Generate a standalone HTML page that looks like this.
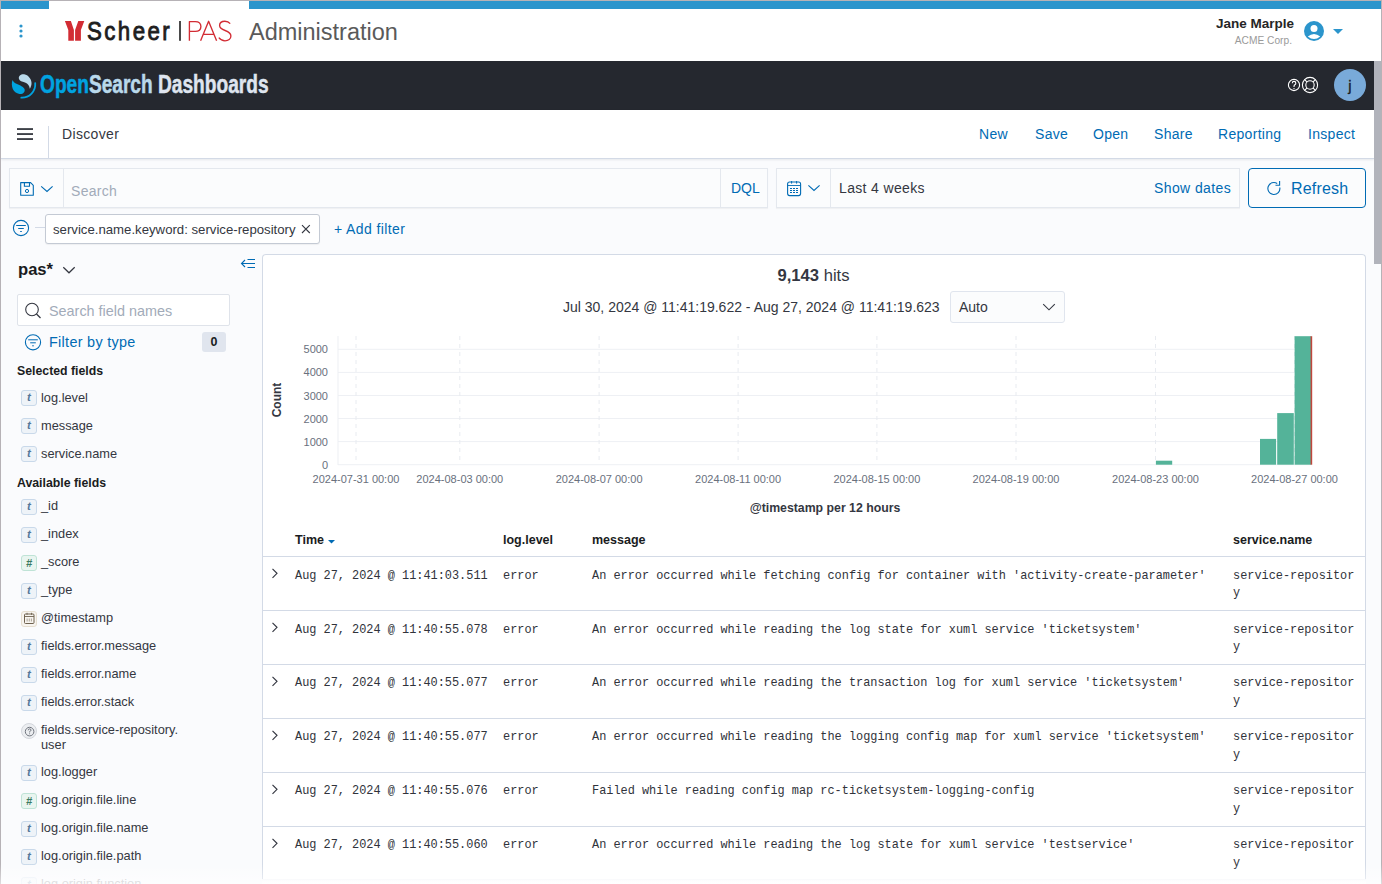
<!DOCTYPE html>
<html><head><meta charset="utf-8">
<style>
*{box-sizing:border-box;margin:0;padding:0}
html,body{width:1382px;height:884px;overflow:hidden;background:#fafbfd;font-family:"Liberation Sans",sans-serif;color:#343741}
.a{position:absolute;white-space:nowrap}
#frame{position:absolute;left:0;top:0;width:1382px;height:884px;border-top:1px solid #b6b2b6;border-left:1px solid #b6b2b6;border-right:1px solid #b6b2b6}
.blue{background:#2b95cc}
.lnk{color:#006bb4}
svg{position:absolute;overflow:visible}
.tok{left:21px;width:16px;height:16px;border-radius:3px;border:1px solid;font-size:11px;line-height:14px;text-align:center;font-weight:bold}
.tt{background:#eef3f8;border-color:#c9d9ea;color:#55789a;font-style:italic;font-size:11.5px;line-height:13px}
.tn{background:#e9f5f0;border-color:#bfe3d6;color:#3b7a62;font-size:11px;font-style:italic;line-height:14px}
.td{background:#f7f4ef;border-color:#e6ded0}
.tq{background:#eceef1;border-color:#d3d6dc;border-radius:50%}
.ytk{left:288px;width:40px;text-align:right;font-size:11px;line-height:12px;color:#69707d}
.xtk{top:473px;width:120px;text-align:center;font-size:11px;line-height:12px;color:#69707d}
.th{top:533px;font-size:12.5px;line-height:14px;font-weight:bold;color:#1a1c21}
.td2{font-family:"Liberation Mono",monospace;font-size:11.9px;line-height:17.6px;color:#30333b;margin-top:-1.2px}
.fld{left:41px;font-size:12.8px;line-height:14px;color:#343741}
</style></head><body>
<!-- ===== top scheer header ===== -->
<div class="a" style="left:0;top:0;width:1382px;height:61px;background:#fff"></div>
<div class="a blue" style="left:1px;top:1px;width:48px;height:8px"></div>
<div class="a blue" style="left:249px;top:1px;width:1132px;height:8px"></div>
<svg style="left:0;top:0" width="1382" height="61">
 <circle cx="21" cy="26" r="1.6" fill="#2b95cc"/><circle cx="21" cy="31" r="1.6" fill="#2b95cc"/><circle cx="21" cy="36" r="1.6" fill="#2b95cc"/>
 <path d="M64.9 21.1 H70.9 L73.9 29.9 V40.8 H68.3 V29.9 Z M78.3 21.1 H84.3 L80.9 29.9 V40.8 H75.1 V29.9 Z" fill="#d22c34"/>
 <rect x="179" y="21" width="2" height="19.8" fill="#4a4a4a"/>
 <g fill="none" stroke="#d22c34" stroke-width="1.35" stroke-linejoin="round">
 <path d="M189.4 40.8 V21.6 H195.2 C198.8 21.6 200.9 23.4 200.9 26.5 C200.9 29.6 198.8 31.4 195.2 31.4 H189.4"/>
 <path d="M200.6 40.8 L208.6 21.3 L216.6 40.8 M203.6 34.3 H213.6"/>
 <path d="M230.2 23.6 C228.8 21.9 227 21.2 224.9 21.2 C221.7 21.2 219.6 23.1 219.6 25.6 C219.6 28.5 222.2 29.5 225.1 30.5 C228.6 31.7 230.9 33.1 230.9 36.1 C230.9 38.9 228.4 40.8 225 40.8 C222.4 40.8 220.3 39.6 218.8 37.7"/>
 </g>
 <circle cx="1314" cy="31" r="10" fill="#2b95cc"/>
 <circle cx="1314" cy="28.4" r="3.5" fill="#fff"/>
 <path d="M1307.8 36.6 Q1314 31.4 1320.2 36.6 Q1314 41.6 1307.8 36.6Z" fill="#fff"/>
 <path d="M1333 29 H1343 L1338 34 Z" fill="#2b95cc"/>
</svg>
<div class="a" id="scheer" style="left:87px;top:16px;font-size:26.5px;line-height:30px;font-weight:normal;color:#1e1e1e;letter-spacing:2.9px;-webkit-text-stroke:0.9px #1e1e1e;transform-origin:0 0;transform:scaleX(0.84)">Scheer</div>
<div class="a" id="admin" style="left:249px;top:18px;font-size:23.5px;line-height:28px;color:#5a5a5a;">Administration</div>
<div class="a" id="jane" style="right:88px;top:17px;font-size:13.5px;line-height:14px;font-weight:bold;color:#262626;text-align:right">Jane Marple</div>
<div class="a" id="acme" style="right:90px;top:35px;font-size:10.2px;line-height:12px;color:#9a9a9a;text-align:right">ACME Corp.</div>

<!-- ===== OSD header ===== -->
<div class="a" style="left:1px;top:61px;width:1373px;height:49px;background:#25282f"></div>
<svg style="left:0;top:61px" width="1374" height="49">
 <g transform="translate(0,-61)">
 <path d="M19 79 C18 75.5 22 73.5 25 74.5 C29 75.5 32 80 31.5 84 C31.2 86 30.5 88 29.8 88.8 C29.5 86 28 83.5 25 82.5 C22 81.5 19.5 81 19 79 Z" fill="#b9d9eb"/>
 <path d="M12.5 80 C10.5 86 13 93 19.5 94 C23 94.3 25.5 92 24.5 89 C23.5 86.5 20 85.5 17 84 C14.5 83 13 81.5 12.5 80 Z" fill="#00a3e0"/>
 <path d="M35.2 83.2 A13.3 13.3 0 0 1 21.3 97.7" stroke="#00a3e0" stroke-width="1.8" fill="none" stroke-linecap="round"/>
 </g>
 <circle cx="1294" cy="24" r="5.6" stroke="#fff" stroke-width="1.1" fill="none"/>
 <circle cx="1310" cy="24" r="7.6" stroke="#fff" stroke-width="1.1" fill="none"/>
 <circle cx="1310" cy="24" r="4.2" stroke="#fff" stroke-width="1.1" fill="none"/>
 <path d="M1312.9 21.1 L1315.4 18.6 M1307.1 21.1 L1304.6 18.6 M1312.9 26.9 L1315.4 29.4 M1307.1 26.9 L1304.6 29.4" stroke="#fff" stroke-width="1.1"/>
 <path d="M1292.3 22.3 Q1292.3 20.4 1294 20.4 Q1295.8 20.4 1295.8 22.2 Q1295.8 23.3 1294.8 23.8 Q1294 24.3 1294 25.4 V25.9" fill="none" stroke="#fff" stroke-width="1.1"/>
 <circle cx="1294" cy="27.6" r="0.7" fill="#fff"/>
 <circle cx="1350" cy="24" r="16" fill="#79aad9"/>
</svg>
<div class="a" style="left:1334px;top:76px;font-size:15px;line-height:20px;color:#1a1c21;width:32px;text-align:center;-webkit-text-stroke:0.3px #1a1c21">j</div>
<div class="a" id="osd" style="left:40px;top:70px;font-size:25px;line-height:28px;font-weight:bold;transform-origin:0 0;transform:scaleX(0.765);-webkit-text-stroke:0.5px currentColor"><span style="color:#00a3e0">Open</span><span style="color:#b9d9eb">Search</span> <span style="color:#dfe5ef">Dashboards</span></div>

<!-- ===== nav bar ===== -->
<div class="a" style="left:1px;top:110px;width:1373px;height:49px;background:#fff;border-bottom:1px solid #d3dae6;box-shadow:0 1px 2px rgba(50,60,80,0.1)"></div>
<svg style="left:0;top:110px" width="100" height="48">
 <rect x="17" y="18.2" width="16" height="1.7" fill="#2a2d35"/>
 <rect x="17" y="23.2" width="16" height="1.7" fill="#2a2d35"/>
 <rect x="17" y="28.2" width="16" height="1.7" fill="#2a2d35"/>
 <rect x="48" y="16" width="1" height="32" fill="#d3dae6"/>
</svg>
<div class="a" id="discover" style="left:62px;top:127px;font-size:14px;line-height:14px;color:#343741;letter-spacing:0.35px">Discover</div>
<div class="a lnk" style="left:979px;top:127px;font-size:14px;line-height:14px;letter-spacing:0.3px">New</div>
<div class="a lnk" style="left:1035px;top:127px;font-size:14px;line-height:14px;letter-spacing:0.3px">Save</div>
<div class="a lnk" style="left:1093px;top:127px;font-size:14px;line-height:14px;letter-spacing:0.3px">Open</div>
<div class="a lnk" style="left:1154px;top:127px;font-size:14px;line-height:14px;letter-spacing:0.3px">Share</div>
<div class="a lnk" style="left:1218px;top:127px;font-size:14px;line-height:14px;letter-spacing:0.3px">Reporting</div>
<div class="a lnk" style="left:1308px;top:127px;font-size:14px;line-height:14px;letter-spacing:0.3px">Inspect</div>


<!-- ===== query bar ===== -->
<div class="a" style="left:9px;top:168px;width:759px;height:40px;background:#fbfcfd;border:1px solid #e4e8ee;box-shadow:0 1px 1px rgba(0,0,0,0.04)"></div>
<div class="a" style="left:63px;top:169px;width:1px;height:38px;background:#e4e8ee"></div>
<div class="a" style="left:720px;top:169px;width:1px;height:38px;background:#e4e8ee"></div>
<div class="a" style="left:776px;top:168px;width:464px;height:40px;background:#fbfcfd;border:1px solid #e4e8ee;box-shadow:0 1px 1px rgba(0,0,0,0.04)"></div>
<div class="a" style="left:830px;top:169px;width:1px;height:38px;background:#e4e8ee"></div>
<svg style="left:0;top:160px" width="900" height="50">
 <path d="M20.7 22.6 H30.6 L33.3 25.3 V35.2 H20.7 Z" fill="none" stroke="#006bb4" stroke-width="1.1" stroke-linejoin="round"/>
 <path d="M24.4 22.6 V26.3 H29.5 V22.6" fill="none" stroke="#006bb4" stroke-width="1.1"/>
 <circle cx="27" cy="31" r="1.6" fill="none" stroke="#006bb4" stroke-width="1"/>
 <path d="M41.2 26.3 L47 31.5 L52.6 26.3" fill="none" stroke="#006bb4" stroke-width="1.1"/>
 <rect x="787.6" y="22" width="13" height="13.6" rx="2" fill="none" stroke="#006bb4" stroke-width="1.1"/>
 <rect x="787.6" y="25" width="13" height="0.9" fill="#006bb4"/>
 <rect x="791.1" y="21" width="1" height="2.6" fill="#006bb4"/>
 <rect x="796.1" y="21" width="1" height="2.6" fill="#006bb4"/>
 <g fill="#006bb4"><rect x="790" y="28" width="2" height="1"/><rect x="793" y="28" width="2" height="1"/><rect x="796" y="28" width="2" height="1"/>
 <rect x="790" y="30" width="2" height="1"/><rect x="793" y="30" width="2" height="1"/><rect x="796" y="30" width="2" height="1"/>
 <rect x="790" y="32" width="2" height="1"/><rect x="793" y="32" width="2" height="1"/><rect x="796" y="32" width="2" height="1"/></g>
 <path d="M808.4 25.3 L814 30.5 L819.6 25.3" fill="none" stroke="#006bb4" stroke-width="1.1"/>
</svg>
<div class="a" style="left:71px;top:184px;font-size:14px;line-height:14px;color:#a2abb9;letter-spacing:0.3px">Search</div>
<div class="a lnk" style="left:731px;top:181px;font-size:14px;line-height:14px">DQL</div>
<div class="a" style="left:839px;top:181px;font-size:14px;line-height:14px;color:#343741;letter-spacing:0.35px">Last 4 weeks</div>
<div class="a lnk" style="left:1154px;top:181px;font-size:14px;line-height:14px;letter-spacing:0.4px">Show dates</div>
<div class="a" style="left:1248px;top:168px;width:118px;height:40px;border:1px solid #006bb4;border-radius:4px;background:#fbfcfd"></div>
<svg style="left:1260px;top:175px" width="30" height="25">
 <path d="M17.2 8.5 A6 6 0 1 0 19.8 12.5" fill="none" stroke="#006bb4" stroke-width="1.1"/>
 <path d="M19.6 6 V10.3 H15.5" fill="none" stroke="#006bb4" stroke-width="1.1"/>
</svg>
<div class="a lnk" style="left:1291px;top:181px;font-size:16px;line-height:16px;letter-spacing:0.2px">Refresh</div>

<!-- ===== filter bar ===== -->
<svg style="left:0;top:210px" width="60" height="40">
 <circle cx="21" cy="18" r="7.6" fill="none" stroke="#006bb4" stroke-width="1.1"/>
 <rect x="16.2" y="15" width="9.6" height="1" fill="#006bb4"/>
 <rect x="18.2" y="18" width="5.6" height="1" fill="#006bb4"/>
 <rect x="20.2" y="21" width="1.6" height="1" fill="#006bb4"/>
 <rect x="35" y="17" width="10" height="1" fill="#d3dae6"/>
</svg>
<div class="a" style="left:45px;top:214px;width:275px;height:30px;background:#fff;border:1px solid #c4cad4;border-radius:3px;box-shadow:0 1px 1px rgba(0,0,0,0.05)"></div>
<div class="a" id="pilltxt" style="left:53px;top:223px;font-size:13.2px;line-height:14px;color:#343741">service.name.keyword: service-repository</div>
<svg style="left:300px;top:223px" width="12" height="12">
 <path d="M2 2.2 L9.8 10 M9.8 2.2 L2 10" stroke="#343741" stroke-width="1.1"/>
</svg>
<div class="a lnk" id="addf" style="left:334px;top:222px;font-size:14px;line-height:14px;letter-spacing:0.4px">+ Add filter</div>


<!-- ===== sidebar ===== -->
<div class="a" id="pas2" style="left:18px;top:261px;font-size:16.6px;line-height:18px;font-weight:bold;color:#1a1c21">pas*</div>
<svg style="left:0;top:250px" width="270" height="80">
 <path d="M63.3 17.3 L69 22.8 L74.7 17.3" fill="none" stroke="#343741" stroke-width="1.2"/>
 <path d="M245 10 L241.5 13.5 L245 17 M241.5 13.5 H255 M247.5 9.5 H255 M247.5 17.5 H255" fill="none" stroke="#006bb4" stroke-width="1.1"/>
</svg>
<div class="a" style="left:17px;top:294px;width:213px;height:32px;background:#fff;border:1px solid #dfe3ea;border-radius:2px"></div>
<svg style="left:0;top:290px" width="260" height="70">
 <circle cx="32" cy="19.5" r="6.3" fill="none" stroke="#343741" stroke-width="1.1"/>
 <path d="M36.5 24 L40.5 28" stroke="#343741" stroke-width="1.2"/>
 <circle cx="33" cy="52.3" r="7.6" fill="none" stroke="#006bb4" stroke-width="1.1"/>
 <rect x="28.2" y="49.3" width="9.6" height="1" fill="#006bb4"/>
 <rect x="30.2" y="52.3" width="5.6" height="1" fill="#006bb4"/>
 <rect x="32.2" y="55.3" width="1.6" height="1" fill="#006bb4"/>
</svg>
<div class="a" style="left:49px;top:304px;font-size:14.4px;line-height:14px;color:#a2abb9">Search field names</div>
<div class="a lnk" style="left:49px;top:335px;font-size:14.4px;line-height:14px;letter-spacing:0.3px">Filter by type</div>
<div class="a" style="left:202px;top:332px;width:24px;height:20px;background:#e0e5ee;border-radius:3px;font-size:12.5px;line-height:20px;text-align:center;color:#1a1c21;font-weight:bold">0</div>
<div class="a" style="left:17px;top:365px;font-size:12.3px;line-height:12px;font-weight:bold;color:#1a1c21">Selected fields</div>
<div class="a tok tt" style="top:390px">t</div><div class="a fld" style="top:390.5px">log.level</div><div class="a tok tt" style="top:418px">t</div><div class="a fld" style="top:418.5px">message</div><div class="a tok tt" style="top:446px">t</div><div class="a fld" style="top:446.5px">service.name</div><div class="a" style="left:17px;top:477px;font-size:12.3px;line-height:12px;font-weight:bold;color:#1a1c21">Available fields</div>
<div class="a tok tt" style="top:498.5px">t</div><div class="a fld" style="top:499.0px">_id</div><div class="a tok tt" style="top:526.5px">t</div><div class="a fld" style="top:527.0px">_index</div><div class="a tok tn" style="top:554.5px">#</div><div class="a fld" style="top:555.0px">_score</div><div class="a tok tt" style="top:582.5px">t</div><div class="a fld" style="top:583.0px">_type</div><div class="a tok td" style="top:610.5px"><svg style="left:-1px;top:-1px" width="16" height="16"><rect x="3.5" y="3" width="9.5" height="9.5" rx="1" fill="none" stroke="#6f6250" stroke-width="1"/><rect x="3.5" y="5" width="9.5" height="0.9" fill="#6f6250"/><rect x="5.6" y="1.8" width="0.9" height="2" fill="#6f6250"/><rect x="10" y="1.8" width="0.9" height="2" fill="#6f6250"/><rect x="5.7" y="7.5" width="0.8" height="3" fill="#9a8f80"/><rect x="7.8" y="7.5" width="0.8" height="3" fill="#9a8f80"/><rect x="9.9" y="7.5" width="0.8" height="3" fill="#9a8f80"/></svg></div><div class="a fld" style="top:611.0px">@timestamp</div><div class="a tok tt" style="top:638.5px">t</div><div class="a fld" style="top:639.0px">fields.error.message</div><div class="a tok tt" style="top:666.5px">t</div><div class="a fld" style="top:667.0px">fields.error.name</div><div class="a tok tt" style="top:694.5px">t</div><div class="a fld" style="top:695.0px">fields.error.stack</div><div class="a tok tq" style="top:722.5px"><svg style="left:0;top:0" width="15" height="15"><circle cx="7.6" cy="7.6" r="4.3" fill="none" stroke="#6f747d" stroke-width="1"/><path d="M6.2 6.3 Q6.2 4.9 7.6 4.9 Q9 4.9 9 6.2 Q9 7 7.6 7.6 V8.4" fill="none" stroke="#6f747d" stroke-width="1"/><circle cx="7.6" cy="9.8" r="0.55" fill="#6f747d"/></svg></div><div class="a fld" style="top:723.0px">fields.service-repository.</div><div class="a fld" style="top:738.0px">user</div><div class="a tok tt" style="top:764.5px">t</div><div class="a fld" style="top:765.0px">log.logger</div><div class="a tok tn" style="top:792.5px">#</div><div class="a fld" style="top:793.0px">log.origin.file.line</div><div class="a tok tt" style="top:820.5px">t</div><div class="a fld" style="top:821.0px">log.origin.file.name</div><div class="a tok tt" style="top:848.5px">t</div><div class="a fld" style="top:849.0px">log.origin.file.path</div><div class="a tok tt" style="top:876.5px">t</div><div class="a fld" style="top:877.0px">log.origin.function</div><div class="a" style="left:1px;top:864px;width:260px;height:20px;background:linear-gradient(rgba(250,251,253,0),rgba(250,251,253,0.7) 60%)"></div>


<!-- ===== main panel ===== -->
<div class="a" style="left:262px;top:254px;width:1104px;height:626px;background:#fff;border:1px solid #d3dae6;border-bottom:none;border-radius:4px 4px 0 0"></div>
<div class="a" style="left:262px;top:879px;width:1104px;height:5px;background:linear-gradient(#f3f5f8,#fdfdfe 40%,#fff)"></div>
<div class="a" id="hits" style="left:0;top:268px;width:1627px;text-align:center;font-size:16.6px;line-height:16px;color:#343741"><b>9,143</b> hits</div>
<div class="a" id="range" style="left:563px;top:300px;font-size:14px;line-height:14px;color:#343741">Jul 30, 2024 @ 11:41:19.622 - Aug 27, 2024 @ 11:41:19.623</div>
<div class="a" style="left:950px;top:291px;width:115px;height:32px;background:#fbfcfd;border:1px solid #e0e5ee;border-radius:3px"></div>
<div class="a" style="left:959px;top:300px;font-size:14px;line-height:14px;color:#343741">Auto</div>
<svg style="left:1000px;top:290px" width="80" height="30">
 <path d="M43.2 14.2 L49 19.8 L54.8 14.2" fill="none" stroke="#343741" stroke-width="1.1"/>
</svg>
<div class="a" id="count" style="left:259px;top:393px;width:35px;font-size:12px;line-height:14px;font-weight:bold;color:#343741;transform:rotate(-90deg);text-align:center">Count</div>
<div class="a ytk" style="top:343.3px">5000</div>
<div class="a ytk" style="top:366.4px">4000</div>
<div class="a ytk" style="top:389.5px">3000</div>
<div class="a ytk" style="top:412.5px">2000</div>
<div class="a ytk" style="top:435.6px">1000</div>
<div class="a ytk" style="top:458.7px">0</div>
<svg style="left:0;top:0" width="1382" height="884">
 <rect x="338" y="348.8" width="974" height="1" fill="#eef0f4"/>
 <rect x="338" y="371.9" width="974" height="1" fill="#eef0f4"/>
 <rect x="338" y="395.0" width="974" height="1" fill="#eef0f4"/>
 <rect x="338" y="418.0" width="974" height="1" fill="#eef0f4"/>
 <rect x="338" y="441.1" width="974" height="1" fill="#eef0f4"/>
 <rect x="338" y="464.2" width="974" height="1" fill="#eef0f4"/>
 <rect x="337.5" y="336" width="1" height="129" fill="#eef0f4"/>
 <line x1="356" y1="336" x2="356" y2="464" stroke="#e8ebf0" stroke-width="1" stroke-dasharray="4 4"/>
 <line x1="459.8" y1="336" x2="459.8" y2="464" stroke="#e8ebf0" stroke-width="1" stroke-dasharray="4 4"/>
 <line x1="599.1" y1="336" x2="599.1" y2="464" stroke="#e8ebf0" stroke-width="1" stroke-dasharray="4 4"/>
 <line x1="738.1" y1="336" x2="738.1" y2="464" stroke="#e8ebf0" stroke-width="1" stroke-dasharray="4 4"/>
 <line x1="876.9" y1="336" x2="876.9" y2="464" stroke="#e8ebf0" stroke-width="1" stroke-dasharray="4 4"/>
 <line x1="1016" y1="336" x2="1016" y2="464" stroke="#e8ebf0" stroke-width="1" stroke-dasharray="4 4"/>
 <line x1="1155.5" y1="336" x2="1155.5" y2="464" stroke="#e8ebf0" stroke-width="1" stroke-dasharray="4 4"/>
 <line x1="1294.5" y1="336" x2="1294.5" y2="464" stroke="#e8ebf0" stroke-width="1" stroke-dasharray="4 4"/>
 <rect x="1155.9" y="460.7" width="16.3" height="4.0" fill="#54b399"/>
 <rect x="1260" y="438.9" width="16.1" height="25.8" fill="#54b399"/>
 <rect x="1277.2" y="413.1" width="16.6" height="51.6" fill="#54b399"/>
 <rect x="1294.6" y="336.2" width="16.4" height="128.5" fill="#54b399"/>
 <rect x="1310.6" y="336.2" width="1.6" height="128.5" fill="#c0473d"/>
</svg>
<div class="a xtk" style="left:296.0px">2024-07-31 00:00</div>
<div class="a xtk" style="left:399.8px">2024-08-03 00:00</div>
<div class="a xtk" style="left:539.1px">2024-08-07 00:00</div>
<div class="a xtk" style="left:678.1px">2024-08-11 00:00</div>
<div class="a xtk" style="left:816.9px">2024-08-15 00:00</div>
<div class="a xtk" style="left:956.0px">2024-08-19 00:00</div>
<div class="a xtk" style="left:1095.5px">2024-08-23 00:00</div>
<div class="a xtk" style="left:1234.5px">2024-08-27 00:00</div>
<div class="a" id="tsl" style="left:625px;top:501px;width:400px;text-align:center;font-size:12.3px;line-height:14px;font-weight:bold;color:#343741">@timestamp per 12 hours</div>


<!-- ===== table ===== -->
<div class="a th" style="left:295px">Time</div>
<svg style="left:320px;top:535px" width="20" height="12"><path d="M8 5 H15 L11.5 8.6 Z" fill="#006bb4"/></svg>
<div class="a th" style="left:503px">log.level</div>
<div class="a th" style="left:592px">message</div>
<div class="a th" style="left:1233px">service.name</div>
<div class="a" style="left:263px;top:556px;width:1102px;height:1px;background:#d3dae6"></div>
<svg style="left:268px;top:566px" width="14" height="14"><path d="M4.5 2.8 L9 7.3 L4.5 11.8" fill="none" stroke="#343741" stroke-width="1.15"/></svg>
<div class="a td2" style="left:295px;top:569.00px">Aug 27, 2024 @ 11:41:03.511</div>
<div class="a td2" style="left:503px;top:569.00px">error</div>
<div class="a td2" style="left:592px;top:569.00px">An error occurred while fetching config for container with 'activity-create-parameter'</div>
<div class="a td2" style="left:1233px;top:569.00px">service-repositor<br>y</div>
<svg style="left:268px;top:620px" width="14" height="14"><path d="M4.5 2.8 L9 7.3 L4.5 11.8" fill="none" stroke="#343741" stroke-width="1.15"/></svg>
<div class="a td2" style="left:295px;top:622.82px">Aug 27, 2024 @ 11:40:55.078</div>
<div class="a td2" style="left:503px;top:622.82px">error</div>
<div class="a td2" style="left:592px;top:622.82px">An error occurred while reading the log state for xuml service 'ticketsystem'</div>
<div class="a td2" style="left:1233px;top:622.82px">service-repositor<br>y</div>
<div class="a" style="left:263px;top:610px;width:1102px;height:1px;background:#d3dae6"></div>
<svg style="left:268px;top:674px" width="14" height="14"><path d="M4.5 2.8 L9 7.3 L4.5 11.8" fill="none" stroke="#343741" stroke-width="1.15"/></svg>
<div class="a td2" style="left:295px;top:676.64px">Aug 27, 2024 @ 11:40:55.077</div>
<div class="a td2" style="left:503px;top:676.64px">error</div>
<div class="a td2" style="left:592px;top:676.64px">An error occurred while reading the transaction log for xuml service 'ticketsystem'</div>
<div class="a td2" style="left:1233px;top:676.64px">service-repositor<br>y</div>
<div class="a" style="left:263px;top:664px;width:1102px;height:1px;background:#d3dae6"></div>
<svg style="left:268px;top:728px" width="14" height="14"><path d="M4.5 2.8 L9 7.3 L4.5 11.8" fill="none" stroke="#343741" stroke-width="1.15"/></svg>
<div class="a td2" style="left:295px;top:730.46px">Aug 27, 2024 @ 11:40:55.077</div>
<div class="a td2" style="left:503px;top:730.46px">error</div>
<div class="a td2" style="left:592px;top:730.46px">An error occurred while reading the logging config map for xuml service 'ticketsystem'</div>
<div class="a td2" style="left:1233px;top:730.46px">service-repositor<br>y</div>
<div class="a" style="left:263px;top:718px;width:1102px;height:1px;background:#d3dae6"></div>
<svg style="left:268px;top:782px" width="14" height="14"><path d="M4.5 2.8 L9 7.3 L4.5 11.8" fill="none" stroke="#343741" stroke-width="1.15"/></svg>
<div class="a td2" style="left:295px;top:784.28px">Aug 27, 2024 @ 11:40:55.076</div>
<div class="a td2" style="left:503px;top:784.28px">error</div>
<div class="a td2" style="left:592px;top:784.28px">Failed while reading config map rc-ticketsystem-logging-config</div>
<div class="a td2" style="left:1233px;top:784.28px">service-repositor<br>y</div>
<div class="a" style="left:263px;top:772px;width:1102px;height:1px;background:#d3dae6"></div>
<svg style="left:268px;top:836px" width="14" height="14"><path d="M4.5 2.8 L9 7.3 L4.5 11.8" fill="none" stroke="#343741" stroke-width="1.15"/></svg>
<div class="a td2" style="left:295px;top:838.10px">Aug 27, 2024 @ 11:40:55.060</div>
<div class="a td2" style="left:503px;top:838.10px">error</div>
<div class="a td2" style="left:592px;top:838.10px">An error occurred while reading the log state for xuml service 'testservice'</div>
<div class="a td2" style="left:1233px;top:838.10px">service-repositor<br>y</div>
<div class="a" style="left:263px;top:826px;width:1102px;height:1px;background:#d3dae6"></div>
<div class="a" style="left:263px;top:826px;width:1102px;height:1px;background:#d3dae6"></div>

<!-- scrollbar -->
<div class="a" style="left:1374px;top:61px;width:7px;height:823px;background:#fafbfd"></div>
<div class="a" style="left:1374px;top:61px;width:7px;height:203px;background:#b1b3bb"></div>
<div class="a" style="left:1381px;top:0;width:1px;height:884px;background:#b6b2b6"></div>
<div class="a" style="left:0;top:0;width:1px;height:884px;background:#b6b2b6"></div>
<div class="a" style="left:0;top:0;width:1382px;height:1px;background:#b6b2b6"></div>
<div class="a" style="left:0;top:864px;width:1382px;height:20px;background:linear-gradient(rgba(255,255,255,0),rgba(255,255,255,0.55))"></div>
</body></html>
